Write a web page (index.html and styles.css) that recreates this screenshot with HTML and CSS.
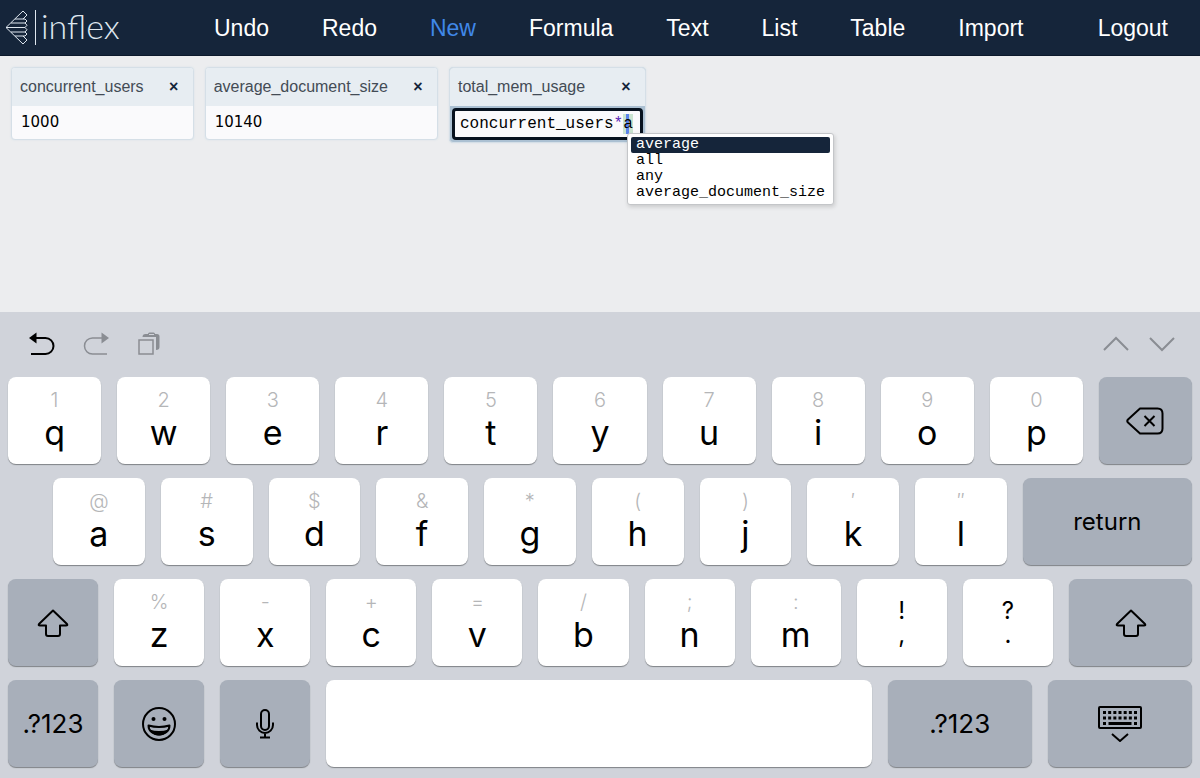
FILE: index.html
```
<!DOCTYPE html>
<html lang="en">
<head>
  <meta charset="UTF-8">
  <meta name="viewport" content="width=device-width, initial-scale=1.0">
  <title>Inflex</title>
  <link rel="stylesheet" href="styles.css">
</head>
<body>
  <header class="nav-bar">
    <a class="logo" href="#">
      <svg class="logo-mark" width="32" height="36" viewBox="0 0 32 36">
        <path d="M1 17.500 18 1l4 4-4 4h2l2 2-2 2 2 2.250-2 2.250 2 2.250-2 2.250 2 2-2 2h-2l4 4-4 4zM18 9h-8M6 13h14M1 17.500h19M6 22h14M18 26h-8"/>
        <path d="M30.500 0v35"/>
      </svg>
      <span>inflex</span>
    </a>
    <nav class="menu">
      <button>Undo</button>
      <button>Redo</button>
      <button class="active">New</button>
      <button>Formula</button>
      <button>Text</button>
      <button>List</button>
      <button>Table</button>
      <button>Import</button>
      <button class="logout">Logout</button>
    </nav>
  </header>

  <main class="canvas">
    <section class="cell">
      <div class="cell-head"><h2>concurrent_users</h2><button aria-label="Delete">×</button></div>
      <div class="cell-body">1000</div>
    </section>
    <section class="cell">
      <div class="cell-head"><h2>average_document_size</h2><button aria-label="Delete">×</button></div>
      <div class="cell-body">10140</div>
    </section>
    <section class="cell editing">
      <div class="cell-head"><h2>total_mem_usage</h2><button aria-label="Delete">×</button></div>
      <div class="editor">
        <!-- coloured copy of the code, the input sits over it -->
        <div class="highlight" aria-hidden="true">concurrent_users<span class="operator">*</span><span class="cursor">a</span></div>
        <input type="text" aria-label="total_mem_usage" value="concurrent_users*a" spellcheck="false">
        <ul class="hints">
          <li class="selected">average</li>
          <li>all</li>
          <li>any</li>
          <li>average_document_size</li>
        </ul>
      </div>
    </section>
  </main>

  <div class="keyboard">
    <div class="toolbar">
      <button aria-label="Undo">
        <svg width="26" height="24" viewBox="0 0 26 24"><path class="line" d="M6 6h10.500a8 8 0 0 1 0 16H2"/><path class="solid" d="M0 6 7.500 .5v11z"/></svg>
      </button>
      <button class="dim" aria-label="Redo">
        <svg width="26" height="24" viewBox="0 0 26 24"><path class="thin" d="M20 6h-10.500a8 8 0 0 0 0 16H24"/><path class="solid" d="M26 6 18.500 .5v11z"/></svg>
      </button>
      <button class="dim" aria-label="Paste">
        <svg width="24" height="24" viewBox="0 0 24 24"><path class="thin" d="M2 8h14v14H2z"/><path class="solid" d="M5.500 5q0-3 3-3H11q0-1.500 1.500-1.500h4Q18 .5 18 2h2q2.500 0 2.500 2.500V15q0 3-3.500 3V5z"/><path class="slot" d="M12 2.500h5"/></svg>
      </button>
      <button class="dim prev" aria-label="Previous field">
        <svg width="26" height="24" viewBox="0 0 26 24"><path class="line" d="M1 18 13 6l12 12"/></svg>
      </button>
      <button class="dim next" aria-label="Next field">
        <svg width="26" height="24" viewBox="0 0 26 24"><path class="line" d="m1 6 12 12L25 6"/></svg>
      </button>
    </div>

    <div class="row">
      <button class="key"><small>1</small>q</button>
      <button class="key"><small>2</small>w</button>
      <button class="key"><small>3</small>e</button>
      <button class="key"><small>4</small>r</button>
      <button class="key"><small>5</small>t</button>
      <button class="key"><small>6</small>y</button>
      <button class="key"><small>7</small>u</button>
      <button class="key"><small>8</small>i</button>
      <button class="key"><small>9</small>o</button>
      <button class="key"><small>0</small>p</button>
      <button class="key dark" aria-label="Backspace">
        <svg width="38" height="28" viewBox="0 0 38 28"><path d="M14 1.500h17.500q5 0 5 5v15q0 5-5 5H14L2 15.500q-1.500-1.500 0-3zM18.500 9l10 10M28.500 9l-10 10"/></svg>
      </button>
    </div>

    <div class="row home">
      <button class="key"><small>@</small>a</button>
      <button class="key"><small>#</small>s</button>
      <button class="key"><small>$</small>d</button>
      <button class="key"><small>&amp;</small>f</button>
      <button class="key"><small>*</small>g</button>
      <button class="key"><small>(</small>h</button>
      <button class="key"><small>)</small>j</button>
      <button class="key"><small>′</small>k</button>
      <button class="key"><small>″</small>l</button>
      <button class="key dark return">return</button>
    </div>

    <div class="row">
      <button class="key dark" aria-label="Shift">
        <svg width="32" height="28" viewBox="0 0 32 28"><path d="M16 1.500 30 15q1 1.500-1 1.500h-6V25q0 2-2 2H11q-2 0-2-2v-8.500H3q-2 0-1-1.500z"/></svg>
      </button>
      <button class="key"><small>%</small>z</button>
      <button class="key"><small>-</small>x</button>
      <button class="key"><small>+</small>c</button>
      <button class="key"><small>=</small>v</button>
      <button class="key"><small>/</small>b</button>
      <button class="key"><small>;</small>n</button>
      <button class="key"><small>:</small>m</button>
      <button class="key pair"><span>!<br>,</span></button>
      <button class="key pair"><span>?<br>.</span></button>
      <button class="key dark shift-right" aria-label="Shift">
        <svg width="32" height="28" viewBox="0 0 32 28"><path d="M16 1.500 30 15q1 1.500-1 1.500h-6V25q0 2-2 2H11q-2 0-2-2v-8.500H3q-2 0-1-1.500z"/></svg>
      </button>
    </div>

    <div class="row">
      <button class="key dark">.?123</button>
      <button class="key dark" aria-label="Emoji">
        <svg width="34" height="34" viewBox="0 0 34 34"><circle cx="17" cy="17" r="16"/><path d="M6.500 18.500q10.500 3 21 0c0 12-21 12-21 0z"/><path class="fill" d="M7.500 22.500q9.500 3 19 0c-3 8-16 8-19 0z"/><circle class="fill" cx="11.500" cy="12" r="2"/><circle class="fill" cx="22.500" cy="12" r="2"/></svg>
      </button>
      <button class="key dark" aria-label="Dictate">
        <svg width="18" height="30" viewBox="0 0 18 30"><rect x="5" y="1" width="8" height="20" rx="4"/><path d="M1 13.500V16a8 8 0 0 0 16 0v-2.500M9 24v4.500M4 28.500h10"/></svg>
      </button>
      <button class="key space" aria-label="Space"></button>
      <button class="key dark numbers">.?123</button>
      <button class="key dark hide" aria-label="Hide keyboard">
        <svg width="44" height="36" viewBox="0 0 44 36"><rect x="1" y="1" width="42" height="21" rx="1"/><path class="dots" d="M5 6.500h34M5 12h34"/><path class="bottom" d="M5 17.500h3M10.500 17.500h23M36 17.500h3"/><path d="m14 28 8 7 8-7"/></svg>
      </button>
    </div>
  </div>
</body>
</html>
```
FILE: styles.css
```
* {
  box-sizing: border-box;
}
body {
  margin: 0;
  min-height: 100vh;
  display: flex;
  flex-direction: column;
  background: #ecedef;
  font-family: "Liberation Sans", Arial, sans-serif;
}
button {
  border: none;
  padding: 0;
  background: none;
  color: inherit;
  font: inherit;
  cursor: pointer;
}
svg {
  display: block;
  fill: none;
  stroke: currentColor;
}

/* top bar */
.nav-bar {
  display: flex;
  align-items: center;
  height: 56px;
  padding: 0 32px 0 5px;
  background: #15253a;
  border-bottom: 1px solid #0c192b;
  color: #fff;
}
.logo {
  display: flex;
  align-items: center;
  gap: 4px;
  width: 209px;
  color: #dfe7ef;
  text-decoration: none;
  font-family: Lato, sans-serif;
  font-size: 34px;
  font-weight: 300;
  line-height: 40px;
}
.logo span {
  padding-bottom: 4px;
}
.menu {
  flex: 1;
  display: flex;
  gap: 53px;
  font-size: 23px;
  line-height: 28px;
}
.menu .active {
  color: #4088e8;
}
.menu .logout {
  margin-left: auto;
}

/* document */
.canvas {
  flex: 1;
  display: flex;
  align-items: flex-start;
  gap: 11px;
  padding: 11px;
}
.cell {
  border: 1px solid #d5dfe7;
  border-radius: 4px;
  background: #fafafc;
  box-shadow: 0 0 2px #d5dfe7;
}
.cell-head {
  display: flex;
  align-items: center;
  justify-content: space-between;
  gap: 23px;
  height: 38px;
  padding: 0 12px 0 8px;
  background: #e7edf2;
  border-radius: 3px 3px 0 0;
}
.cell-head h2 {
  margin: 0;
  color: #434b55;
  font-size: 16px;
  font-weight: normal;
}
.cell-head button {
  width: 14px;
  color: #15253a;
  font-size: 16px;
  font-weight: bold;
}
.cell-body {
  padding: 0 9px;
  font-family: "DejaVu Sans", sans-serif;
  font-size: 15px;
  line-height: 33px;
}
.editing {
  background: #abc0d2;
}
.editor {
  position: relative;
  margin: 2px;
  border: 3px solid #07121f;
  border-radius: 4px;
  background: #fafafc;
  font-family: "Liberation Mono", "Courier New", monospace;
  font-size: 16px;
}
.highlight {
  padding: 0 7px 0 5px;
  line-height: 26px;
}
.operator {
  color: #5a28b8;
}
.cursor {
  padding: 1px 0;
  background: linear-gradient(90deg, transparent 30%, #5c83ea 30%, #5c83ea 65%, transparent 65%) #c9e3d0;
}
.editor input {
  position: absolute;
  inset: 0;
  width: 100%;
  border: none;
  outline: none;
  padding: 0 5px;
  background: none;
  color: transparent;
  font: inherit;
}
.hints {
  position: absolute;
  top: 22px;
  left: 172px;
  z-index: 1;
  margin: 0;
  padding: 3px;
  list-style: none;
  background: #fff;
  border: 1px solid #c4c6c9;
  border-radius: 3px;
  box-shadow: 1px 2px 4px rgba(0, 0, 0, 0.15);
  font-size: 15px;
  line-height: 16px;
}
.hints li {
  padding: 0 5px;
  border-radius: 2px;
}
.hints .selected {
  background: #15253a;
  color: #fff;
}

/* on-screen keyboard */
.keyboard {
  display: flex;
  flex-direction: column;
  gap: 14px;
  padding: 0 8px 11px;
  background: #d0d3da;
  font-family: Inter, sans-serif;
}
.toolbar {
  display: flex;
  align-items: center;
  gap: 28px;
  height: 51px;
  padding: 13px 17px 0 21px;
}
.toolbar .dim {
  color: #8a8d93;
}
.toolbar .prev {
  margin-left: auto;
}
.toolbar .next {
  margin-left: -8px;
}
.line {
  stroke-width: 2;
}
.thin {
  stroke-width: 1.5;
}
.solid {
  fill: currentColor;
  stroke: none;
}
.slot {
  stroke: #d0d3da;
}
.row {
  display: flex;
  gap: 16px;
}
.home {
  padding-left: 45px;
}
.key {
  flex: 90 1 0;
  min-width: 0;
  height: 87px;
  display: flex;
  flex-direction: column;
  align-items: center;
  padding-top: 11px;
  border-radius: 8px;
  background: #fff;
  box-shadow: 0 1px 1px #7f8287;
  color: #000;
  font-size: 34px;
  font-weight: 400;
  line-height: 42px;
}
.key small {
  color: #b5b6b8;
  font-size: 20px;
  font-weight: 300;
  line-height: 24px;
}
.key svg {
  stroke-width: 2;
  stroke-linejoin: round;
}
.key.pair {
  justify-content: center;
  padding-top: 0;
  font-size: 24px;
  line-height: 24px;
}
.key.dark {
  justify-content: center;
  padding-top: 0;
  background: #a8afba;
  font-size: 26px;
}
.key.return {
  flex-grow: 166;
  font-size: 24px;
}
.key.shift-right {
  flex-grow: 123;
}
.key.space {
  flex-grow: 545;
}
.key.numbers,
.key.hide {
  flex-grow: 144;
}
.key .fill {
  fill: currentColor;
  stroke: none;
}
.key .dots {
  stroke-width: 3;
  stroke-dasharray: 3 2.170;
}
.key .bottom {
  stroke-width: 3;
}
```
